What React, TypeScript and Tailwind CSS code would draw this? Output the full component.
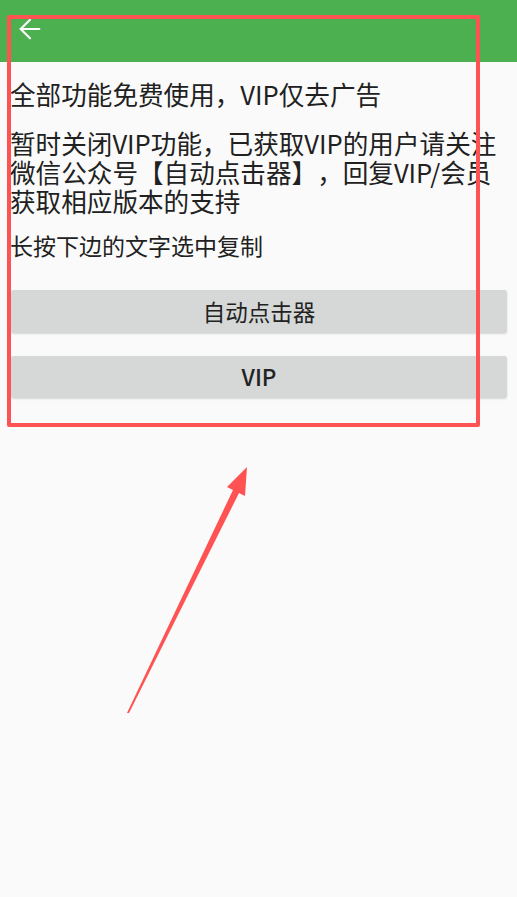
import { ArrowLeft } from 'lucide-react';

const font = { fontFamily: '"Noto Sans CJK SC", "Noto Sans", sans-serif' };

export default function App() {
  return (
    <div
      className="relative min-h-[897px] w-full bg-[#fafafa] text-[#212121] [text-spacing-trim:space-all]"
      style={font}
    >
      {/* toolbar */}
      <header className="h-[62px] bg-[#4caf50] flex items-start pl-[14px] pt-[13px]">
        <ArrowLeft className="w-[32px] h-[32px] text-white" strokeWidth={1.6} />
      </header>

      <main className="px-[10px] pt-[17px]">
        <p className="text-[25.6px] leading-[29px]">全部功能免费使用，VIP仅去广告</p>
        <p className="mt-[20px] text-[25.6px] leading-[29px]">
          暂时关闭VIP功能，已获取VIP的用户请关注微信公众号【自动点击器】，回复VIP/会员获取相应版本的支持
        </p>
        <p className="mt-[17px] text-[23px] leading-[27px]">长按下边的文字选中复制</p>

        <div className="mt-[31px] flex flex-col gap-[23px] pl-px">
          <button className="h-[43px] w-full rounded-[3px] bg-[#d6d7d7] shadow-[0_1px_2px_rgba(0,0,0,0.15)] text-[22.5px] text-[#222]">
            自动点击器
          </button>
          <button className="h-[42px] w-full rounded-[3px] bg-[#d6d7d7] shadow-[0_1px_2px_rgba(0,0,0,0.15)] text-[22.5px] font-medium text-[#222]">
            VIP
          </button>
        </div>
      </main>

      {/* annotation overlay */}
      <div className="absolute left-[7px] top-[15px] w-[473px] h-[412px] border-[4px] border-[#ff5252] rounded-[2px] pointer-events-none" />
      <svg className="absolute left-0 top-0 pointer-events-none" width="517" height="897" viewBox="0 0 517 897">
        <polygon
          points="127,713 129,713 239,493 245,496 247,467 227,487 233,490"
          fill="#ff5252"
        />
      </svg>
    </div>
  );
}
